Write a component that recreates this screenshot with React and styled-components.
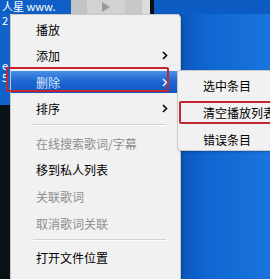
import styled, { createGlobalStyle } from "styled-components"

const GlobalStyle = createGlobalStyle`
  html, body {
    margin: 0;
    padding: 0;
    width: 270px;
    height: 279px;
    overflow: hidden;
  }
  body {
    font-family: "Noto Sans CJK SC", "Noto Sans", sans-serif;
  }
`

const Screen = styled.div`
  position: relative;
  width: 270px;
  height: 279px;
  overflow: hidden;
  display: flex;
  flex-direction: column;
  background: #0c1316;
`

const TopBar = styled.div`
  height: 14px;
  display: flex;
  flex-shrink: 0;
`

const TitleSeg = styled.div`
  width: 69px;
  background: #0f5fc6;
  color: #fff;
  font-size: 11px;
  line-height: 12px;
  padding-left: 2px;
  overflow: hidden;
  white-space: nowrap;
`

const Toolbar = styled.div`
  width: 79px;
  display: flex;
  background: #c6c6c6;
`

const ToolButton = styled.div`
  width: ${(p) => p.w}px;
  background: ${(p) => p.bg};
  display: flex;
  align-items: center;
  justify-content: center;
`

const Divider = styled.div`
  width: 4px;
  background: #0d0d0d;
`

const BlueFill = styled.div`
  flex: 1;
  background: #0b5bc2;
`

const Body = styled.div`
  flex: 1;
  display: flex;
`

const LeftStrip = styled.div`
  width: 10px;
  display: flex;
  flex-direction: column;
`

const LeftBlue = styled.div`
  height: 91px;
  background: #1163cc;
  color: #fff;
  font-size: 11px;
  line-height: 12px;
  padding-left: 2px;
  box-sizing: border-box;
  overflow: hidden;
`

const StripText = styled.div`
  margin-top: ${(p) => p.offset}px;
`

const LeftDark = styled.div`
  flex: 1;
  background: #0b1215;
`

const Middle = styled.div`
  flex: 1;
  background: #f0f0f0;
`

const RightPanel = styled.div`
  width: 90px;
  background: linear-gradient(90deg, #0a56bc 0%, #0f66d0 30%, #1a74dc 100%);
  border-left: 1px solid #0a4aa0;
`

const Menu = styled.div`
  position: absolute;
  left: ${(p) => p.x}px;
  top: ${(p) => p.y}px;
  width: ${(p) => p.w}px;
  height: ${(p) => p.h}px;
  box-sizing: border-box;
  background: #f1f1f1;
  border: 1px solid #c9c9c9;
  border-radius: 2px 4px 4px 4px;
  box-shadow: 1px 1px 2px rgba(0, 0, 0, 0.25);
  padding: 3px 0 0;
  font-size: 12px;
`

const Item = styled.div`
  height: 22px;
  margin-bottom: ${(p) => p.gap ?? 4.6}px;
  display: flex;
  align-items: center;
  padding-left: 25px;
  padding-right: 12px;
  color: ${(p) => (p.active ? "#dce9ff" : p.disabled ? "#8e8e8e" : "#000")};
  background: ${(p) =>
    p.active ? "linear-gradient(180deg, #4b8fe6 0%, #1f68d2 45%, #0f56c2 100%)" : "transparent"};
`

const Label = styled.span`
  flex: 1;
  white-space: nowrap;
`

const Separator = styled.div`
  height: 1px;
  margin: 3px 14px 6px 22px;
  background: #d2d2d2;
  border-bottom: 1px solid #fff;
`

const Mark = styled.div`
  position: absolute;
  left: ${(p) => p.x}px;
  top: ${(p) => p.y}px;
  width: ${(p) => p.w}px;
  height: ${(p) => p.h}px;
  box-sizing: border-box;
  border: 2px solid #c3262e;
  border-radius: 2px;
`

function Chevron({ color = "#000" }) {
  return (
    <svg width="6" height="9" viewBox="0 0 6 9">
      <path d="M1 1 L4.5 4.5 L1 8" fill="none" stroke={color} strokeWidth="1.6" />
    </svg>
  )
}

const mainItems = [
  { label: "播放" },
  { label: "添加", sub: true },
  { label: "删除", sub: true, active: true },
  { label: "排序", sub: true, sep: true },
  { label: "在线搜索歌词/字幕", disabled: true },
  { label: "移到私人列表" },
  { label: "关联歌词", disabled: true },
  { label: "取消歌词关联", disabled: true, sep: true },
  { label: "打开文件位置" },
]

const subItems = ["选中条目", "清空播放列表", "错误条目"]

export default function App() {
  return (
    <>
      <GlobalStyle />
      <Screen>
        <TopBar>
          <TitleSeg>人星 www.</TitleSeg>
          <Toolbar>
            <ToolButton w={16} bg="#c4c4c4" />
            <ToolButton w={38} bg="#d2d2d2">
              <svg width="8" height="10" viewBox="0 0 8 10">
                <path d="M0 0 L8 5 L0 10 Z" fill="#9a9a9a" />
              </svg>
            </ToolButton>
            <ToolButton w={17} bg="#c8c8c8" />
            <ToolButton w={8} bg="#dcdcdc" />
          </Toolbar>
          <Divider />
          <BlueFill />
        </TopBar>
        <Body>
          <LeftStrip>
            <LeftBlue>
              <StripText offset={0}>2</StripText>
              <StripText offset={33}>e</StripText>
              <StripText offset={0}>5</StripText>
            </LeftBlue>
            <LeftDark />
          </LeftStrip>
          <Middle />
          <RightPanel />
        </Body>

        <Menu x={10} y={14} w={171} h={290}>
          {mainItems.map((it) => (
            <div key={it.label}>
              <Item active={it.active} disabled={it.disabled}>
                <Label>{it.label}</Label>
                {it.sub && <Chevron color={it.active ? "#e6efff" : "#000"} />}
              </Item>
              {it.sep && <Separator />}
            </div>
          ))}
        </Menu>

        <Menu x={177} y={70} w={110} h={81}>
          {subItems.map((s) => (
            <Item key={s} gap={5}>
              <Label>{s}</Label>
            </Item>
          ))}
        </Menu>

        <Mark x={6} y={67} w={163} h={25} />
        <Mark x={179} y={101} w={100} h={23} />
      </Screen>
    </>
  )
}
